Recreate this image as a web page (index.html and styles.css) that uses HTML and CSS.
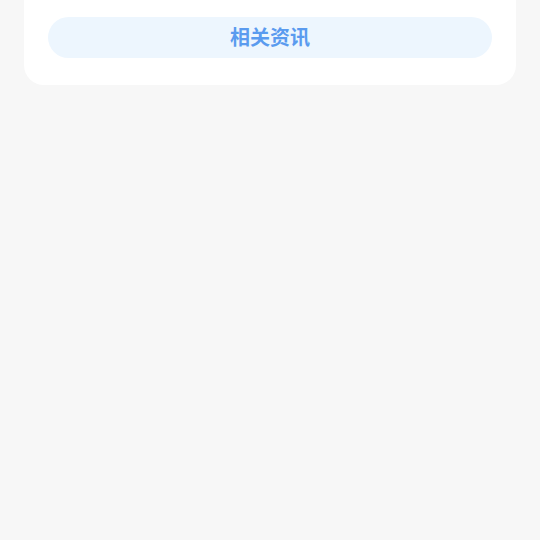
FILE: index.html
```html
<!DOCTYPE html>
<html lang="zh-CN">
<head>
    <meta charset="UTF-8">
    <meta name="viewport" content="width=device-width, initial-scale=1.0">
    <title>相关资讯</title>
    <link rel="stylesheet" href="styles.css">
</head>
<body>

<div class="card">
    <!-- Related news link -->
    <button class="news-btn">相关资讯</button>
</div>

</body>
</html>
```

FILE: styles.css
```css
body {
    margin: 0;
    background-color: #f7f7f7;
    font-family: "Noto Sans CJK SC", "Noto Sans", sans-serif;
}
.card {
    margin: -24px 24px 0;
    padding: 41px 24px 27px;
    background: white;
    border-radius: 0 0 20px 20px;
}
.news-btn {
    display: block;
    width: 100%;
    height: 41px;
    padding: 0 0 3px;
    border: none;
    border-radius: 21px;
    background-color: #edf6fe;
    color: #5a9bef;
    font-family: inherit;
    font-size: 20px;
    font-weight: bold;
    cursor: pointer;
}
```
